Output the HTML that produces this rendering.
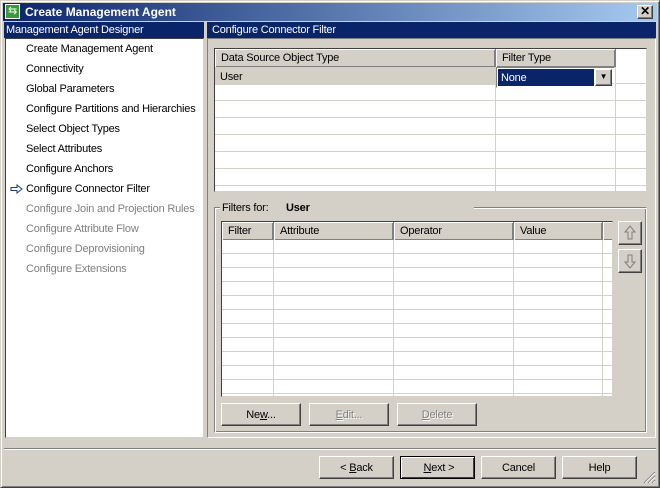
<!DOCTYPE html>
<html><head><style>
*{box-sizing:border-box;margin:0;padding:0}
body{width:660px;height:488px;background:#d4d0c8;font-family:"Liberation Sans",Arial,sans-serif;font-size:11px;letter-spacing:-0.2px;color:#000;position:relative;overflow:hidden}
.a{position:absolute}
.win{left:0;top:0;width:660px;height:488px;border:1px solid;border-color:#d4d0c8 #404040 #404040 #d4d0c8;box-shadow:inset 1px 1px #fff,inset -1px -1px #808080}
.title{left:3px;top:3px;width:654px;height:18px;background:linear-gradient(90deg,#0a246a,#a6caf0);color:#fff;font-weight:bold;font-size:12px;letter-spacing:0;line-height:18px;padding-left:22px}
.hdr{background:#0a246a;color:#fff;height:16px;line-height:17px;padding-left:2px;top:22px}
.sunk{border:1px solid;border-color:#808080 #fff #fff #808080}
.sunk2{border:1px solid;border-color:#404040 #d4d0c8 #d4d0c8 #404040}
.btn{height:23px;background:#d4d0c8;border:1px solid;border-color:#fff #404040 #404040 #fff;box-shadow:inset -1px -1px #808080;text-align:center;line-height:22px}
.dis{color:#808080;text-shadow:1px 1px #fff}
.li{left:26px;height:20px;line-height:22px}
.g{color:#808080}
.th{position:absolute;top:0;height:18px;line-height:19px;padding-left:6px;background:#d4d0c8;border-right:1px solid #808080;box-shadow:inset 1px 1px #fff,inset -1px -1px #808080}
u{text-decoration:underline}
</style></head><body>
<div class="a win"></div>
<div class="a title">Create Management Agent</div>
<div class="a" style="left:5px;top:4px;width:15px;height:15px;background:#3a9a3a;border:1px solid #fff;color:#fff;font-size:11px;line-height:12px;text-align:center">⇆</div>
<div class="a btn" style="left:637px;top:5px;width:16px;height:14px;line-height:11px;font-weight:bold;font-size:12px">✕</div>

<div class="a hdr" style="left:4px;width:200px">Management Agent Designer</div>
<div class="a hdr" style="left:207px;width:449px;padding-left:5px">Configure Connector Filter</div>

<div class="a sunk2" style="left:5px;top:38px;width:199px;height:400px;background:#fff"></div>
<div class="a li" style="top:38px">Create Management Agent</div>
<div class="a li" style="top:58px">Connectivity</div>
<div class="a li" style="top:78px">Global Parameters</div>
<div class="a li" style="top:98px">Configure Partitions and Hierarchies</div>
<div class="a li" style="top:118px">Select Object Types</div>
<div class="a li" style="top:138px">Select Attributes</div>
<div class="a li" style="top:158px">Configure Anchors</div>
<div class="a li" style="top:178px">Configure Connector Filter</div>
<div class="a li g" style="top:198px">Configure Join and Projection Rules</div>
<div class="a li g" style="top:218px">Configure Attribute Flow</div>
<div class="a li g" style="top:238px">Configure Deprovisioning</div>
<div class="a li g" style="top:258px">Configure Extensions</div>
<svg class="a" style="left:10px;top:184px" width="14" height="10"><path d="M1 3.5H7V1L12 5L7 9V6.5H1Z" fill="#fff" stroke="#1a3a8a" stroke-width="1"/></svg>

<div class="a sunk" style="left:207px;top:38px;width:449px;height:400px"></div>

<div class="a sunk2" style="left:214px;top:48px;width:433px;height:144px;background:#fff;overflow:hidden">
 <div class="a" style="left:0;top:18px;width:431px;height:124px;background:repeating-linear-gradient(180deg,transparent 0 16px,#d4d0c8 16px 17px)"></div>
 <div class="a" style="left:280px;top:18px;width:1px;height:124px;background:#d4d0c8"></div>
 <div class="a" style="left:400px;top:18px;width:1px;height:124px;background:#d4d0c8"></div>
 <div class="th" style="left:0;width:281px">Data Source Object Type</div>
 <div class="th" style="left:281px;width:120px">Filter Type</div>
 <div class="a" style="left:0;top:18px;width:280px;height:18px;background:#d4d0c8;line-height:20px;padding-left:5px">User</div>
 <div class="a" style="left:281px;top:18px;width:119px;height:21px;border:1px solid;border-color:#808080 #fff #fff #808080"></div>
 <div class="a" style="left:283px;top:20px;width:96px;height:17px;background:#0a246a;color:#fff;line-height:19px;padding-left:3px">None</div>
 <div class="a btn" style="left:380px;top:20px;width:17px;height:17px;line-height:14px;font-size:8px">▼</div>
</div>

<div class="a" style="left:214px;top:207px;width:433px;height:226px;border:1px solid;border-color:#808080 #fff #fff #808080;box-shadow:inset 1px 1px #fff,inset -1px -1px #808080"></div>
<div class="a" style="left:220px;top:200px;background:#d4d0c8;padding:0 2px;height:15px;line-height:16px;width:254px">Filters for:<b style="position:absolute;left:66px">User</b></div>

<div class="a sunk2" style="left:221px;top:221px;width:392px;height:176px;background:#fff;overflow:hidden">
 <div class="a" style="left:0;top:18px;width:390px;height:156px;background:repeating-linear-gradient(180deg,transparent 0 13px,#d4d0c8 13px 14px)"></div>
 <div class="a" style="left:51px;top:18px;width:1px;height:156px;background:#d4d0c8"></div>
 <div class="a" style="left:171px;top:18px;width:1px;height:156px;background:#d4d0c8"></div>
 <div class="a" style="left:291px;top:18px;width:1px;height:156px;background:#d4d0c8"></div>
 <div class="a" style="left:380px;top:18px;width:1px;height:156px;background:#d4d0c8"></div>
 <div class="th" style="left:0;width:52px">Filter</div>
 <div class="th" style="left:52px;width:120px">Attribute</div>
 <div class="th" style="left:172px;width:120px">Operator</div>
 <div class="th" style="left:292px;width:89px">Value</div>
 <div class="th" style="left:381px;width:12px"></div>
</div>

<div class="a btn" style="left:618px;top:221px;width:24px;height:24px"><svg width="22" height="22"><path d="M11 4L6 10H9V17H13V10H16Z" fill="#d4d0c8" stroke="#808080"/></svg></div>
<div class="a btn" style="left:618px;top:249px;width:24px;height:24px"><svg width="22" height="22"><path d="M11 18L6 12H9V5H13V12H16Z" fill="#d4d0c8" stroke="#808080"/></svg></div>

<div class="a btn" style="left:221px;top:403px;width:80px">Ne<u>w</u>...</div>
<div class="a btn dis" style="left:309px;top:403px;width:80px"><u>E</u>dit...</div>
<div class="a btn dis" style="left:397px;top:403px;width:80px"><u>D</u>elete</div>

<div class="a" style="left:4px;top:448px;width:652px;height:2px;border-top:1px solid #808080;border-bottom:1px solid #fff"></div>

<div class="a btn" style="left:319px;top:456px;width:75px">&lt; <u>B</u>ack</div>
<div class="a btn" style="left:400px;top:456px;width:75px;border:1px solid #000;box-shadow:inset 1px 1px #fff,inset -1px -1px #404040">&nbsp;<u>N</u>ext &gt;</div>
<div class="a btn" style="left:481px;top:456px;width:75px">Cancel</div>
<div class="a btn" style="left:562px;top:456px;width:75px">Help</div>
<svg class="a" style="left:643px;top:471px" width="13" height="13"><path d="M12 1L1 12M12 5L5 12M12 9L9 12" stroke="#808080" stroke-width="1.2"/><path d="M12 2L2 12M12 6L6 12M12 10L10 12" stroke="#fff" stroke-width="0.8"/></svg>
</body></html>
